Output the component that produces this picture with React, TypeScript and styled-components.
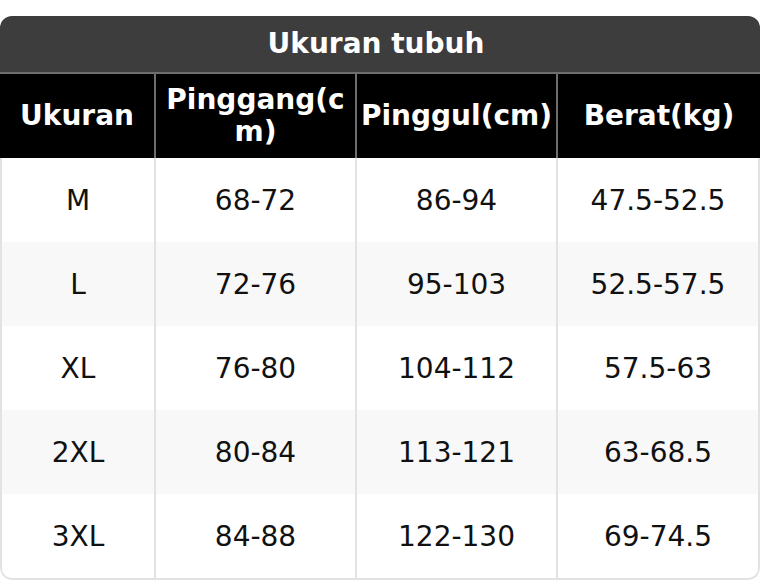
import React from 'react';
import styled, { createGlobalStyle } from 'styled-components';

const GlobalStyle = createGlobalStyle`
  html, body {
    margin: 0;
    padding: 0;
    background: #ffffff;
  }
  body {
    font-family: "DejaVu Sans", "Liberation Sans", sans-serif;
  }
`;

const Page = styled.div`
  width: 760px;
  height: 580px;
  padding-top: 16px;
  box-sizing: border-box;
`;

const Card = styled.div`
  border-radius: 12px;
  overflow: hidden;
`;

const Title = styled.div`
  height: 54px;
  padding: 0 8px 2px 0;
  background: #3d3d3d;
  border-bottom: 2px solid #6e6e6e;
  color: #ffffff;
  font-weight: bold;
  font-size: 28px;
  display: flex;
  align-items: center;
  justify-content: center;
`;

const Row = styled.div<{ $striped?: boolean }>`
  display: grid;
  grid-template-columns: 152px 201px 201px 1fr;
  height: 84px;
  background: ${p => (p.$striped ? '#f8f8f8' : '#ffffff')};
`;

const HeadRow = styled(Row)`
  grid-template-columns: 154px 201px 201px 1fr;
  background: #000000;
`;

const Body = styled.div`
  border: 2px solid #e2e2e2;
  border-top: none;
  border-radius: 0 0 12px 12px;
  overflow: hidden;
`;

const HeadCell = styled.div<{ $first?: boolean }>`
  display: flex;
  align-items: center;
  justify-content: center;
  text-align: center;
  padding: 0 3px;
  border-left: ${p => (p.$first ? 'none' : '2px solid #6e6e6e')};
  color: #ffffff;
  font-weight: bold;
  font-size: 28px;
  line-height: 1.15;
  word-break: break-all;
`;

const Cell = styled.div<{ $first?: boolean }>`
  display: flex;
  align-items: center;
  justify-content: center;
  border-left: ${p => (p.$first ? 'none' : '2px solid #e2e2e2')};
  color: #111111;
  font-size: 28px;
`;

const headers = ['Ukuran', 'Pinggang(cm)', 'Pinggul(cm)', 'Berat(kg)'];

const rows = [
  ['M', '68-72', '86-94', '47.5-52.5'],
  ['L', '72-76', '95-103', '52.5-57.5'],
  ['XL', '76-80', '104-112', '57.5-63'],
  ['2XL', '80-84', '113-121', '63-68.5'],
  ['3XL', '84-88', '122-130', '69-74.5'],
];

const App: React.FC = () => {
  return (
    <Page>
      <GlobalStyle />
      <Card>
        <Title>Ukuran tubuh</Title>
        <HeadRow>
          {headers.map((h, i) => (
            <HeadCell key={h} $first={i === 0}>{h}</HeadCell>
          ))}
        </HeadRow>
        <Body>
          {rows.map((r, ri) => (
            <Row key={r[0]} $striped={ri % 2 === 1}>
              {r.map((v, ci) => (
                <Cell key={ci} $first={ci === 0}>{v}</Cell>
              ))}
            </Row>
          ))}
        </Body>
      </Card>
    </Page>
  );
};

export default App;
